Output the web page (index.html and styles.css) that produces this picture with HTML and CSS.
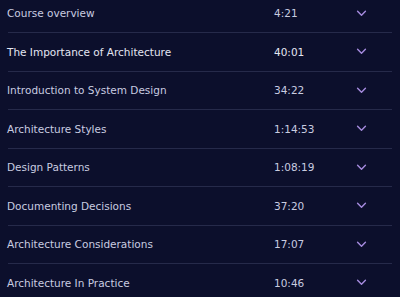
FILE: index.html
```html
<!DOCTYPE html>
<html lang="en">
<head>
    <meta charset="UTF-8">
    <meta name="viewport" content="width=device-width, initial-scale=1.0">
    <title>Course Content</title>
    <link rel="stylesheet" href="styles.css">
</head>
<body>
    <ul class="lessons">
        <li class="lesson">
            <span class="lesson-title">Course overview</span>
            <span class="lesson-time">4:21</span>
            <svg class="chevron" viewBox="0 0 12 8"><path d="M1.5 1.5 6 6l4.5-4.5"/></svg>
        </li>
        <li class="lesson lesson-bright">
            <span class="lesson-title">The Importance of Architecture</span>
            <span class="lesson-time">40:01</span>
            <svg class="chevron" viewBox="0 0 12 8"><path d="M1.5 1.5 6 6l4.5-4.5"/></svg>
        </li>
        <li class="lesson">
            <span class="lesson-title">Introduction to System Design</span>
            <span class="lesson-time">34:22</span>
            <svg class="chevron" viewBox="0 0 12 8"><path d="M1.5 1.5 6 6l4.5-4.5"/></svg>
        </li>
        <li class="lesson">
            <span class="lesson-title">Architecture Styles</span>
            <span class="lesson-time">1:14:53</span>
            <svg class="chevron" viewBox="0 0 12 8"><path d="M1.5 1.5 6 6l4.5-4.5"/></svg>
        </li>
        <li class="lesson">
            <span class="lesson-title">Design Patterns</span>
            <span class="lesson-time">1:08:19</span>
            <svg class="chevron" viewBox="0 0 12 8"><path d="M1.5 1.5 6 6l4.5-4.5"/></svg>
        </li>
        <li class="lesson">
            <span class="lesson-title">Documenting Decisions</span>
            <span class="lesson-time">37:20</span>
            <svg class="chevron" viewBox="0 0 12 8"><path d="M1.5 1.5 6 6l4.5-4.5"/></svg>
        </li>
        <li class="lesson">
            <span class="lesson-title">Architecture Considerations</span>
            <span class="lesson-time">17:07</span>
            <svg class="chevron" viewBox="0 0 12 8"><path d="M1.5 1.5 6 6l4.5-4.5"/></svg>
        </li>
        <li class="lesson">
            <span class="lesson-title">Architecture In Practice</span>
            <span class="lesson-time">10:46</span>
            <svg class="chevron" viewBox="0 0 12 8"><path d="M1.5 1.5 6 6l4.5-4.5"/></svg>
        </li>
    </ul>
</body>
</html>
```

FILE: styles.css
```css
/* General Reset */
* {
    margin: 0;
    padding: 0;
    box-sizing: border-box;
}

body {
    font-family: "DejaVu Sans", sans-serif;
    background-color: #0c0f2c;
    color: #c9cce0;
    overflow: hidden;
}

.lessons {
    list-style: none;
    margin-top: -5.5px;
}

.lesson {
    display: grid;
    grid-template-columns: 266px 82px 11px;
    align-items: center;
    height: 38.5px;
    margin: 0 8px 0 8px;
    border-bottom: 1px solid #262a4a;
    font-size: 10.5px;
}

.lesson-title {
    margin-left: -1px;
}

.lesson-bright {
    color: #e4e6f2;
}

.chevron {
    width: 11px;
    height: 7px;
    fill: none;
    stroke: #a78ce0;
    stroke-width: 1.6;
    stroke-linecap: round;
    stroke-linejoin: round;
}
```
